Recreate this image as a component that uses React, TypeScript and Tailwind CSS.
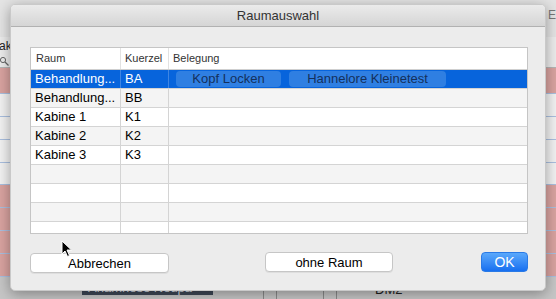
import React from "react";

const rows = [
  { raum: "Behandlung...", k: "BA", sel: true },
  { raum: "Behandlung...", k: "BB" },
  { raum: "Kabine 1", k: "K1" },
  { raum: "Kabine 2", k: "K2" },
  { raum: "Kabine 3", k: "K3" },
  { raum: "", k: "" },
  { raum: "", k: "" },
  { raum: "", k: "" },
  { raum: "", k: "" },
];

function BgRows({ count, pink }: { count: number; pink?: boolean }) {
  return (
    <>
      {Array.from({ length: count }).map((_, i) => (
        <div
          key={i}
          className={`h-[23px] border-b border-[#a9bfdf] ${pink ? "bg-[#d9a3a0]" : "bg-[#f2f2f2]"}`}
        />
      ))}
    </>
  );
}

export default function App() {
  return (
    <div
      className="relative w-[556px] h-[299px] overflow-hidden bg-[#e6e6e6] text-[13px] text-black"
      style={{ fontFamily: '"Liberation Sans", Arial, sans-serif' }}
    >
      {/* background application */}
      <div className="flex flex-col w-full h-full">
        <div className="h-[37px] bg-[#e4e4e4] flex justify-end items-start pt-[9px] pr-0">
          <span className="text-[12px] text-[#777] leading-none">E</span>
        </div>
        <div className="h-[31px] bg-[#ececec] border-b border-[#b5b5b5] flex flex-col pl-0 pt-[3px]">
          <span className="text-[12px] leading-none -ml-[1px] text-[#222]">akt</span>
          <svg width="10" height="10" viewBox="0 0 10 10" className="mt-[5px]">
            <circle cx="3" cy="3" r="2.6" fill="none" stroke="#666" strokeWidth="1" />
            <line x1="5" y1="5" x2="8.5" y2="8.5" stroke="#666" strokeWidth="1.2" />
          </svg>
        </div>
        <div className="h-[27px] bg-[#d9a3a0] border-b border-[#a9bfdf]" />
        <BgRows count={4} />
        <BgRows count={4} pink />
        <div className="flex-1 bg-[#c6c6c6] flex items-start">
          <div className="ml-[82px] w-[131px] h-[14px] bg-[#3e4856] text-[#d6dbe2] text-[13px] leading-[14px] pl-[6px] mt-[4px]">
            Anamnese Neupa
          </div>
          <div className="ml-[50px] h-full border-l border-[#8a8a8a]" />
          <div className="ml-[12px] h-full border-l border-[#8a8a8a]" />
          <div className="ml-[46px] h-full border-l border-[#8a8a8a]" />
          <div className="ml-[12px] h-full border-l border-[#8a8a8a]" />
          <span className="ml-[38px] mt-[3px] text-[13px] text-[#222]">DM2</span>
        </div>
      </div>

      {/* dialog window */}
      <div className="absolute left-[10px] top-[4px] w-[536px] h-[287px] bg-[#ececec] rounded-[5px] shadow-[0_3px_14px_rgba(0,0,0,0.35)] border border-[#c9c9c9] overflow-hidden flex flex-col">
        <div className="h-[22px] shrink-0 bg-gradient-to-b from-[#ebebeb] to-[#d5d5d5] border-b border-[#b1b1b1] flex items-center justify-center text-[13px] text-[#333]">
          Raumauswahl
        </div>

        <div className="pl-[19px] pt-[20px]">
          <div className="w-[498px] h-[187px] border border-[#c5c5c5] bg-white overflow-hidden">
            {/* header */}
            <div className="flex h-[22px] border-b border-[#cfcfcf] bg-white text-[11px] text-[#333]">
              <div className="w-[90px] border-r border-[#e2e2e2] pl-[5px] flex items-center">Raum</div>
              <div className="w-[48px] border-r border-[#e2e2e2] pl-[4px] flex items-center">Kuerzel</div>
              <div className="flex-1 pl-[4px] flex items-center">Belegung</div>
            </div>
            {rows.map((r, i) => {
              const bg = r.sel ? "bg-[#0764dc] text-white" : i % 2 === 1 ? "bg-[#f4f4f4]" : "bg-white";
              const sep = r.sel ? "border-[#3f86e3]" : "border-[#d4d4d4]";
              return (
                <div key={i} className={`flex h-[19px] border-b border-[#d4d4d4] ${bg}`}>
                  <div className={`w-[90px] border-r ${sep} pl-[4px] flex items-center whitespace-nowrap`}>{r.raum}</div>
                  <div className={`w-[48px] border-r ${sep} pl-[4px] flex items-center`}>{r.k}</div>
                  <div className="flex-1 flex items-start pt-[1px] pl-[7px] gap-[8px]">
                    {r.sel && (
                      <>
                        <div className="w-[105px] h-[16px] rounded-[4px] bg-[#2f7fe2] text-[#14305c] flex items-center justify-center">
                          Kopf Locken
                        </div>
                        <div className="w-[157px] h-[16px] rounded-[4px] bg-[#2f7fe2] text-[#14305c] flex items-center justify-center">
                          Hannelore Kleinetest
                        </div>
                      </>
                    )}
                  </div>
                </div>
              );
            })}
          </div>
        </div>

        <div className="flex items-start pl-[19px] pt-[18px]">
          <button className="w-[139px] h-[20px] mt-[1px] bg-white border border-[#c6c6c6] rounded-[4px] shadow-[0_1px_0_rgba(0,0,0,0.06)] text-[13px] text-black leading-none">
            Abbrechen
          </button>
          <button className="ml-[96px] w-[128px] h-[20px] bg-white border border-[#c6c6c6] rounded-[4px] shadow-[0_1px_0_rgba(0,0,0,0.06)] text-[13px] text-black leading-none">
            ohne Raum
          </button>
          <button className="ml-[88px] w-[47px] h-[20px] rounded-[4px] bg-gradient-to-b from-[#5aa8fb] to-[#166ff0] border border-[#2a7ae6] text-white text-[14px] leading-none">
            OK
          </button>
        </div>
      </div>

      {/* mouse cursor */}
      <svg className="absolute left-[61px] top-[240px]" width="12" height="18" viewBox="0 0 12 18">
        <path d="M1 1 L1 14 L4 11 L6.5 16.5 L8.5 15.5 L6 10 L10.5 10 Z" fill="#000" stroke="#fff" strokeWidth="1" strokeLinejoin="round" />
      </svg>
    </div>
  );
}
